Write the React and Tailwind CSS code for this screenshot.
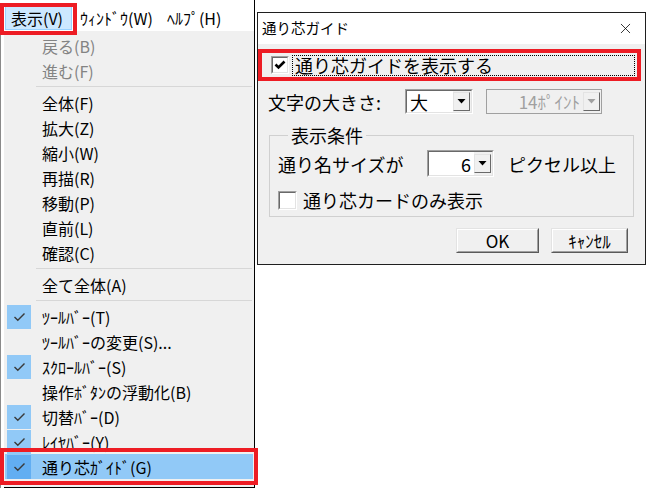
import React from 'react';
import { X } from 'lucide-react';

const menuItems = [
  { label: '戻る(B)', disabled: true },
  { label: '進む(F)', disabled: true },
  { sep: true },
  { label: '全体(F)' },
  { label: '拡大(Z)' },
  { label: '縮小(W)' },
  { label: '再描(R)' },
  { label: '移動(P)' },
  { label: '直前(L)' },
  { label: '確認(C)' },
  { sep: true },
  { label: '全て全体(A)' },
  { sep: true },
  { label: 'ﾂｰﾙﾊﾞｰ(T)', checked: true },
  { label: 'ﾂｰﾙﾊﾞｰの変更(S)...' },
  { label: 'ｽｸﾛｰﾙﾊﾞｰ(S)', checked: true },
  { label: '操作ﾎﾞﾀﾝの浮動化(B)' },
  { label: '切替ﾊﾞｰ(D)', checked: true },
  { label: 'ﾚｲﾔﾊﾞｰ(Y)', checked: true },
  { label: '通り芯ｶﾞｲﾄﾞ(G)', checked: true, active: true },
];

function MenuCheck() {
  return (
    <svg width="13" height="10" viewBox="0 0 13 10" fill="none">
      <polyline points="1.5,5 4.8,8.3 11.5,1.5" stroke="#3a3a3a" strokeWidth="1.4" />
    </svg>
  );
}

function Sunken({ className, children }) {
  return (
    <div className={`border border-t-[#a0a0a0] border-l-[#a0a0a0] border-b-white border-r-white ${className}`}>
      <div className="w-full h-full border border-t-[#696969] border-l-[#696969] border-b-[#e3e3e3] border-r-[#e3e3e3] flex items-center">
        {children}
      </div>
    </div>
  );
}

function CheckBox({ checked, size = 'w-[18px] h-[18px]' }) {
  return (
    <Sunken className={`${size} shrink-0`}>
      <div className="w-full h-full bg-white flex items-center justify-center">
        {checked && (
          <svg width="12" height="10" viewBox="0 0 12 10" fill="none">
            <polyline points="1.5,4.5 4.5,7.5 10.5,1.5" stroke="#000" strokeWidth="2.6" />
          </svg>
        )}
      </div>
    </Sunken>
  );
}

function DropButton({ disabled }) {
  return (
    <div className="w-[17px] h-[19px] mr-[1px] border border-t-[#e3e3e3] border-l-[#e3e3e3] border-b-[#696969] border-r-[#696969] bg-[#f0f0f0] flex items-center justify-center">
      <svg width="9" height="5" viewBox="0 0 9 5">
        <polygon points="0.5,0 8.5,0 4.5,4.5" fill={disabled ? '#a0a0a0' : '#000'} />
      </svg>
    </div>
  );
}

function Button({ children, className }) {
  return (
    <div className={`h-[25px] border border-t-[#e3e3e3] border-l-[#e3e3e3] border-b-[#5a5a5a] border-r-[#5a5a5a] bg-[#f0f0f0] ${className}`}>
      <div className="w-full h-full border border-t-white border-l-white border-b-[#a0a0a0] border-r-[#a0a0a0] flex items-center justify-center text-[17px] leading-none text-black">
        {children}
      </div>
    </div>
  );
}

export default function App() {
  return (
    <div className='relative w-[650px] h-[488px] bg-white flex overflow-hidden font-["Noto_Sans_CJK_JP","Noto_Sans",sans-serif]'>
      {/* menu column */}
      <div className="w-[255px] h-full flex flex-col border-r border-black shrink-0">
        <div className="h-[31px] bg-white flex items-start text-[16px] text-black">
          <div className="ml-[5px] mt-[6px] h-[24px] w-[67px] bg-[#cce8ff] border border-[#99d1ff] flex items-center pl-[5px] leading-none">
            表示(V)
          </div>
          <div className="ml-[8px] h-[31px] flex items-center leading-none pt-[5px]">ｳｨﾝﾄﾞｳ(W)</div>
          <div className="ml-[14px] h-[31px] flex items-center leading-none pt-[5px]">ﾍﾙﾌﾟ(H)</div>
        </div>
        <div className="flex-1 flex">
          <div className="w-[4px] bg-white border-l border-[#8a8a8a]"></div>
          <div className="flex-1 bg-[#f0f0f0] pt-[2px] border-b border-black">
            {menuItems.map((it, i) =>
              it.sep ? (
                <div key={i} className="h-[7px] flex items-center">
                  <div className="ml-[32px] mr-[2px] flex-1 h-px bg-[#d7d7d7]"></div>
                </div>
              ) : (
                <div
                  key={i}
                  className={`h-[25px] mx-[1px] flex items-center ${it.active ? 'bg-[#91c9f7]' : ''}`}
                >
                  <div
                    className={`ml-[2px] w-[24px] h-[24px] flex items-center justify-center ${
                      it.checked ? (it.active ? 'bg-[#62aef2]' : 'bg-[#91c9f7]') : ''
                    }`}
                  >
                    {it.checked && <MenuCheck />}
                  </div>
                  <span
                    className={`ml-[11px] text-[16px] leading-none whitespace-nowrap ${
                      it.disabled ? 'text-[#838383]' : 'text-black'
                    }`}
                  >
                    {it.label}
                  </span>
                </div>
              )
            )}
          </div>
        </div>
      </div>

      {/* dialog */}
      <div className="ml-[2px] mt-[12px] w-[389px] h-[253px] border border-[#1f1f1f] flex flex-col shrink-0">
        <div className="h-[31px] bg-white flex items-center justify-between pl-[4px] pr-[11px]">
          <span className="text-[14.5px] leading-none text-black">通り芯ガイド</span>
          <X size={17} strokeWidth={1.1} color="#000" />
        </div>
        <div className="flex-1 bg-[#f0f0f0] flex flex-col text-[18px] leading-none text-black">
          <div className="mt-[5px] mr-[4px] h-[32px] border-4 border-[#ed1c24] flex items-center pl-[9px]">
            <CheckBox checked />
            <div className="ml-[3px] mr-[2px] flex-1 h-[21px] border border-dotted border-black flex items-center pl-[2px]">
              通り芯ガイドを表示する
            </div>
          </div>

          <div className="mt-[8px] h-[25px] flex items-center pl-[10px]">
            <span className="w-[137px] whitespace-nowrap">文字の大きさ:</span>
            <Sunken className="w-[68px] h-[25px]">
              <div className="flex-1 h-full bg-white flex items-center pl-[3px]">大</div>
              <DropButton />
            </Sunken>
            <div className="ml-[13px] w-[116px] h-[25px] border border-[#a0a0a0] bg-[#f0f0f0] flex items-center">
              <div className="flex-1 h-full flex items-center justify-end pr-[3px] text-[#a0a0a0] text-[17px]">
                14ﾎﾟｲﾝﾄ
              </div>
              <DropButton disabled />
            </div>
          </div>

          <fieldset className="mt-[9px] ml-[11px] w-[365px] h-[94px] border border-[#d0d0d0] pl-[8px]">
            <legend className="ml-[10px] px-[3px] leading-[24px]">表示条件</legend>
            <div className="mt-[3px] h-[27px] flex items-center">
              <span className="w-[149px] whitespace-nowrap">通り名サイズが</span>
              <Sunken className="w-[67px] h-[27px]">
                <div className="flex-1 h-full bg-white flex items-center justify-end pr-[3px]">6</div>
                <DropButton />
              </Sunken>
              <span className="ml-[14px] whitespace-nowrap">ピクセル以上</span>
            </div>
            <div className="mt-[11px] h-[24px] flex items-center">
              <CheckBox size="w-[19px] h-[19px]" />
              <span className="ml-[6px] whitespace-nowrap">通り芯カードのみ表示</span>
            </div>
          </fieldset>

          <div className="mt-[11px] flex justify-end gap-[12px] pr-[17px]">
            <Button className="w-[83px]">OK</Button>
            <Button className="w-[77px]">ｷｬﾝｾﾙ</Button>
          </div>
        </div>
      </div>

      {/* red annotation boxes */}
      <div className="absolute left-0 top-[3px] w-[77px] h-[32px] border-4 border-[#ed1c24]"></div>
      <div className="absolute left-0 top-[448px] w-[258px] h-[37px] border-4 border-[#ed1c24]"></div>
    </div>
  );
}
